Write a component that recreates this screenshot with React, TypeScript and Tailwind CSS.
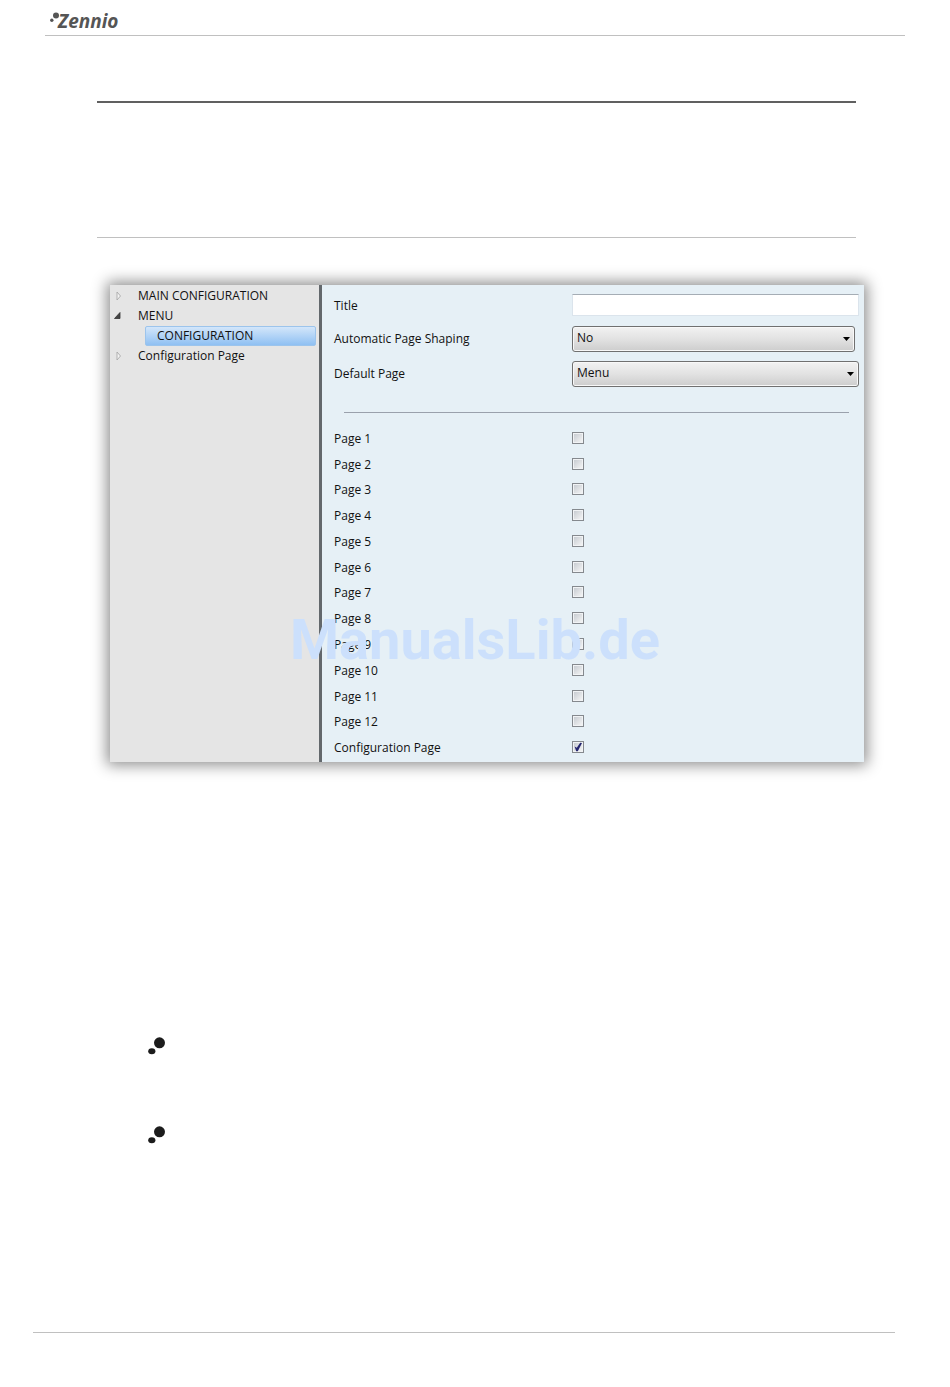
import React from 'react';

const PAGES = [
  'Page 1',
  'Page 2',
  'Page 3',
  'Page 4',
  'Page 5',
  'Page 6',
  'Page 7',
  'Page 8',
  'Page 9',
  'Page 10',
  'Page 11',
  'Page 12',
  'Configuration Page',
];

function Logo() {
  return (
    <div className="flex items-start h-5 text-[#555555]">
      <svg viewBox="0 0 10 12" className="w-[10px] h-3 fill-current" aria-hidden="true">
        <circle cx="6" cy="4.4" r="3" />
        <circle cx="1.8" cy="9.2" r="1.7" />
      </svg>
      <span className="-ml-0.5 font-['Open_Sans',sans-serif] text-[19px] leading-5 font-bold italic">Zennio</span>
    </div>
  );
}

function TreeArrow({ open }: { open?: boolean }) {
  return (
    <svg viewBox="0 0 8 10" className="w-2 h-[10px] shrink-0" aria-hidden="true">
      {open ? (
        <path d="M6 1.5V7.5H0.5Z" fill="#444444" stroke="#333333" strokeWidth="0.8" />
      ) : (
        <path d="M3 1L6.5 5L3 9Z" fill="#f4f4f4" stroke="#a9a9a9" strokeWidth="0.9" />
      )}
    </svg>
  );
}

function TreeItem({ label, open }: { label: string; open?: boolean }) {
  return (
    <button type="button" aria-expanded={!!open} className="flex items-center gap-4 h-5 w-full pl-1 text-left">
      <TreeArrow open={open} />
      <span>{label}</span>
    </button>
  );
}

function Dropdown({ id, options, className }: { id: string; options: string[]; className?: string }) {
  return (
    <div className={className}>
      <div className="relative">
        <select
          id={id}
          className="block appearance-none w-full h-[26px] pl-1 pr-6 pb-0.5 rounded-[3px] border border-[#707070] bg-linear-to-b from-[#f2f2f2] via-[#e2e2e2] to-[#cdcdcd] shadow-[inset_0_0_0_1px_#f8f8f8] outline-none"
        >
          {options.map((o) => (
            <option key={o}>{o}</option>
          ))}
        </select>
        <svg viewBox="0 0 7 4" className="absolute right-[5px] top-[11px] w-[7px] h-1 pointer-events-none" aria-hidden="true">
          <path d="M0 0H7L3.5 4Z" fill="#000000" />
        </svg>
      </div>
    </div>
  );
}

function PageRow({ label, checked }: { label: string; checked?: boolean }) {
  const id = label.toLowerCase().replace(/ /g, '-');
  return (
    <div className="grid grid-cols-[238px_1fr] items-center">
      <label htmlFor={id} className="pt-0.5">
        {label}
      </label>
      <div className="relative w-3 h-3">
        <input
          id={id}
          type="checkbox"
          defaultChecked={checked}
          className="peer block appearance-none w-3 h-3 border border-[#85898e] bg-linear-to-br from-[#c3c8ce] to-[#f8f8f8] shadow-[inset_0_0_0_1px_#f1f3f5]"
        />
        <svg
          viewBox="0 0 12 12"
          className="absolute inset-0 w-3 h-3 hidden peer-checked:block pointer-events-none"
          aria-hidden="true"
        >
          <path d="M2.6 5.4L4.8 6.8L8.2 1.8L10 2L5.8 10.2H4.2Z" fill="#25266f" />
        </svg>
      </div>
    </div>
  );
}

function Bullet() {
  return (
    <svg viewBox="0 0 18 18" className="w-[18px] h-[18px] fill-[#1c1c1c]" aria-hidden="true">
      <circle cx="11.5" cy="5.8" r="5.5" />
      <ellipse cx="3.8" cy="14.2" rx="3.6" ry="3" />
    </svg>
  );
}

export default function App() {
  return (
    <div className="bg-white text-[#111111] font-['Open_Sans',sans-serif] text-[12px] leading-4">
      <header className="ml-[45px] mr-[45px] pt-[11px] pl-[5px] pb-1 border-b border-[#c0c0c0]">
        <Logo />
      </header>

      <main>
        <hr className="mt-[65px] ml-[97px] mr-[94px] border-t-2 border-[#606060]" />
        <hr className="mt-[134px] ml-[97px] mr-[94px] border-[#c0c0c0]" />

        {/* Parameter dialog */}
        <section className="relative mt-[47px] pl-[110px] pr-[86px]">
          <div className="flex bg-[#e6f0f6] shadow-[0_0_14px_3px_rgba(0,0,0,0.45)]">
            <nav className="w-[209px] shrink-0 pt-px bg-[#e5e5e5]">
              <ul>
                <li>
                  <TreeItem label="MAIN CONFIGURATION" />
                </li>
                <li>
                  <TreeItem label="MENU" open />
                  <ul className="pl-[35px] pr-[3px]">
                    <li>
                      <button
                        type="button"
                        className="block w-full h-5 pl-[11px] text-left rounded-xs border border-[#9cc4ec] bg-linear-to-b from-[#d3e6fa] to-[#8fc0f2] leading-4"
                      >
                        CONFIGURATION
                      </button>
                    </li>
                  </ul>
                </li>
                <li>
                  <TreeItem label="Configuration Page" />
                </li>
              </ul>
            </nav>

            <form className="flex-1 border-l-3 border-[#63686c] pt-[9px] pl-3 pr-[5px] pb-0.5">
              <div className="grid grid-cols-[238px_1fr] items-center">
                <label htmlFor="title" className="pt-0.5">
                  Title
                </label>
                <input
                  id="title"
                  type="text"
                  className="w-full h-[22px] px-1 bg-white border border-[#dbe4ec] border-t-[#a5adb5] outline-none"
                />
              </div>
              <div className="mt-[10px] grid grid-cols-[238px_1fr] items-center">
                <label htmlFor="shaping">Automatic Page Shaping</label>
                <Dropdown id="shaping" options={['No', 'Yes']} className="pr-1" />
              </div>
              <div className="mt-[9px] grid grid-cols-[238px_1fr] items-center">
                <label htmlFor="default-page">Default Page</label>
                <Dropdown id="default-page" options={['Menu', ...PAGES]} />
              </div>

              <hr className="mt-[25px] ml-[10px] mr-[10px] border-[#9aa1ac]" />

              <div className="mt-3 h-[335px] grid auto-rows-fr">
                {PAGES.map((p) => (
                  <PageRow key={p} label={p} checked={p === 'Configuration Page'} />
                ))}
              </div>
            </form>
          </div>

          {/* Watermark */}
          <div className="absolute inset-x-0 bottom-[90px] text-center font-[Roboto,sans-serif] font-bold text-[56px] leading-16 text-[#cce0fc] pointer-events-none">
            ManualsLib.de
          </div>
        </section>

        <div className="mt-[275px] pl-[148px] flex flex-col gap-[71px]">
          <Bullet />
          <Bullet />
        </div>
      </main>

      <footer className="mt-[188px] ml-[33px] mr-[55px] pb-[54px] border-t border-[#c0c0c0]" />
    </div>
  );
}
